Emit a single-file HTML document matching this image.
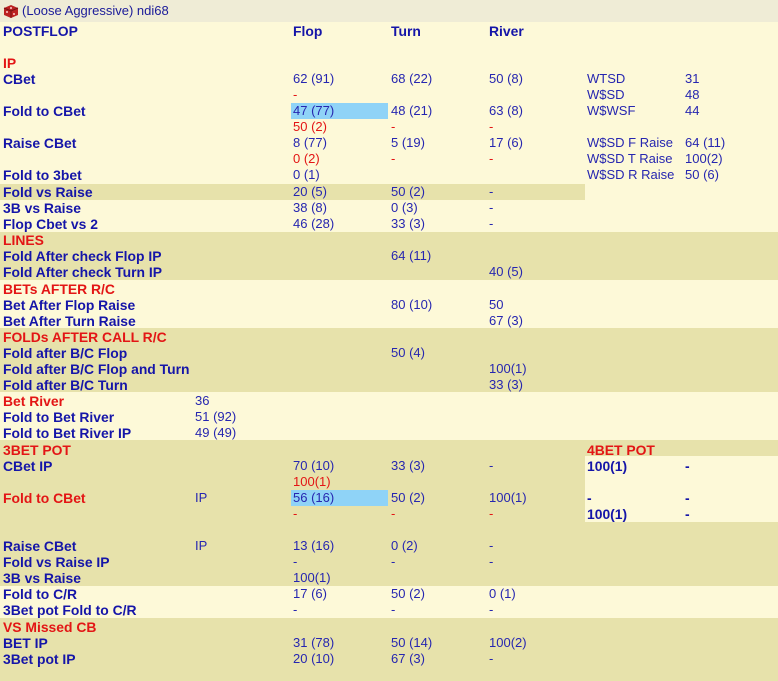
<!DOCTYPE html>
<html><head><meta charset="utf-8"><style>
body{margin:0;width:778px;height:681px;overflow:hidden;background:#fdf9d8;font-family:"Liberation Sans",Arial,sans-serif;font-size:13px;position:relative}
.d{position:absolute;background:#e7e2ab}
.l{position:absolute;background:#fdf9d8}
.h{position:absolute;background:#8fd3f7;width:97px;height:16px}
.t{position:absolute;line-height:16px;color:#2626b0;white-space:nowrap}
.b{font-weight:bold;color:#1515a8;font-size:13.9px}
.r{color:#e31515}
.rb{font-weight:bold;color:#e31515;font-size:13.9px}
</style></head><body>
<div class="d" style="left:0;top:0;width:778px;height:22px;background:#efecd6"></div>
<svg style="position:absolute;left:3px;top:3px" width="16" height="16" viewBox="0 0 16 16"><path d="M1 5 L8 2 L15 5 L15 12 L8 15 L1 12Z" fill="#b22"/><path d="M1 5 L8 8 L15 5 M8 8 L8 15" stroke="#711" fill="none"/><circle cx="4" cy="9" r="1" fill="#fcc"/><circle cx="11" cy="11" r="1" fill="#fcc"/><circle cx="8" cy="5" r="1" fill="#fcc"/></svg>
<div class="t" style="left:22px;top:3px;color:#1a1a99">(Loose Aggressive) ndi68</div>

<div class="d" style="left:0;top:184px;width:585px;height:16px"></div>
<div class="d" style="left:0;top:232px;width:778px;height:48px"></div>
<div class="d" style="left:0;top:328px;width:778px;height:64px"></div>
<div class="d" style="left:0;top:440px;width:778px;height:146px"></div>
<div class="l" style="left:585px;top:456px;width:193px;height:66px"></div>
<div class="d" style="left:0;top:618px;width:778px;height:63px"></div>
<div class="h" style="left:291px;top:103px"></div>
<div class="h" style="left:291px;top:490px"></div>

<div class="t b" style="left:3px;top:23px">POSTFLOP</div>
<div class="t b" style="left:293px;top:23px">Flop</div>
<div class="t b" style="left:391px;top:23px">Turn</div>
<div class="t b" style="left:489px;top:23px">River</div>
<div class="t rb" style="left:3px;top:55px">IP</div>
<div class="t b" style="left:3px;top:71px">CBet</div>
<div class="t" style="left:293px;top:71px">62 (91)</div><div class="t" style="left:391px;top:71px">68 (22)</div><div class="t" style="left:489px;top:71px">50 (8)</div>
<div class="t" style="left:587px;top:71px">WTSD</div><div class="t" style="left:685px;top:71px">31</div>
<div class="t r" style="left:293px;top:87px">-</div>
<div class="t" style="left:587px;top:87px">W$SD</div><div class="t" style="left:685px;top:87px">48</div>
<div class="t b" style="left:3px;top:103px">Fold to CBet</div>
<div class="t" style="left:293px;top:103px">47 (77)</div><div class="t" style="left:391px;top:103px">48 (21)</div><div class="t" style="left:489px;top:103px">63 (8)</div>
<div class="t" style="left:587px;top:103px">W$WSF</div><div class="t" style="left:685px;top:103px">44</div>
<div class="t r" style="left:293px;top:119px">50 (2)</div><div class="t r" style="left:391px;top:119px">-</div><div class="t r" style="left:489px;top:119px">-</div>
<div class="t b" style="left:3px;top:135px">Raise CBet</div>
<div class="t" style="left:293px;top:135px">8 (77)</div><div class="t" style="left:391px;top:135px">5 (19)</div><div class="t" style="left:489px;top:135px">17 (6)</div>
<div class="t" style="left:587px;top:135px">W$SD F Raise</div><div class="t" style="left:685px;top:135px">64 (11)</div>
<div class="t r" style="left:293px;top:151px">0 (2)</div><div class="t r" style="left:391px;top:151px">-</div><div class="t r" style="left:489px;top:151px">-</div>
<div class="t" style="left:587px;top:151px">W$SD T Raise</div><div class="t" style="left:685px;top:151px">100(2)</div>
<div class="t b" style="left:3px;top:167px">Fold to 3bet</div><div class="t" style="left:293px;top:167px">0 (1)</div>
<div class="t" style="left:587px;top:167px">W$SD R Raise</div><div class="t" style="left:685px;top:167px">50 (6)</div>
<div class="t b" style="left:3px;top:184px">Fold vs Raise</div><div class="t" style="left:293px;top:184px">20 (5)</div><div class="t" style="left:391px;top:184px">50 (2)</div><div class="t" style="left:489px;top:184px">-</div>
<div class="t b" style="left:3px;top:200px">3B vs Raise</div><div class="t" style="left:293px;top:200px">38 (8)</div><div class="t" style="left:391px;top:200px">0 (3)</div><div class="t" style="left:489px;top:200px">-</div>
<div class="t b" style="left:3px;top:216px">Flop Cbet vs 2</div><div class="t" style="left:293px;top:216px">46 (28)</div><div class="t" style="left:391px;top:216px">33 (3)</div><div class="t" style="left:489px;top:216px">-</div>
<div class="t rb" style="left:3px;top:232px">LINES</div>
<div class="t b" style="left:3px;top:248px">Fold After check Flop IP</div><div class="t" style="left:391px;top:248px">64 (11)</div>
<div class="t b" style="left:3px;top:264px">Fold After check Turn IP</div><div class="t" style="left:489px;top:264px">40 (5)</div>
<div class="t rb" style="left:3px;top:281px">BETs AFTER R/C</div>
<div class="t b" style="left:3px;top:297px">Bet After Flop Raise</div><div class="t" style="left:391px;top:297px">80 (10)</div><div class="t" style="left:489px;top:297px">50</div>
<div class="t b" style="left:3px;top:313px">Bet After Turn Raise</div><div class="t" style="left:489px;top:313px">67 (3)</div>
<div class="t rb" style="left:3px;top:329px">FOLDs AFTER CALL R/C</div>
<div class="t b" style="left:3px;top:345px">Fold after B/C Flop</div><div class="t" style="left:391px;top:345px">50 (4)</div>
<div class="t b" style="left:3px;top:361px">Fold after B/C Flop and Turn</div><div class="t" style="left:489px;top:361px">100(1)</div>
<div class="t b" style="left:3px;top:377px">Fold after B/C Turn</div><div class="t" style="left:489px;top:377px">33 (3)</div>
<div class="t rb" style="left:3px;top:393px">Bet River</div><div class="t" style="left:195px;top:393px">36</div>
<div class="t b" style="left:3px;top:409px">Fold to Bet River</div><div class="t" style="left:195px;top:409px">51 (92)</div>
<div class="t b" style="left:3px;top:425px">Fold to Bet River IP</div><div class="t" style="left:195px;top:425px">49 (49)</div>
<div class="t rb" style="left:3px;top:442px">3BET POT</div><div class="t rb" style="left:587px;top:442px">4BET POT</div>
<div class="t b" style="left:3px;top:458px">CBet IP</div><div class="t" style="left:293px;top:458px">70 (10)</div><div class="t" style="left:391px;top:458px">33 (3)</div><div class="t" style="left:489px;top:458px">-</div>
<div class="t b" style="left:587px;top:458px">100(1)</div><div class="t b" style="left:685px;top:458px">-</div>
<div class="t r" style="left:293px;top:474px">100(1)</div>
<div class="t rb" style="left:3px;top:490px">Fold to CBet</div><div class="t" style="left:195px;top:490px">IP</div>
<div class="t" style="left:293px;top:490px">56 (16)</div><div class="t" style="left:391px;top:490px">50 (2)</div><div class="t" style="left:489px;top:490px">100(1)</div>
<div class="t b" style="left:587px;top:490px">-</div><div class="t b" style="left:685px;top:490px">-</div>
<div class="t r" style="left:293px;top:506px">-</div><div class="t r" style="left:391px;top:506px">-</div><div class="t r" style="left:489px;top:506px">-</div>
<div class="t b" style="left:587px;top:506px">100(1)</div><div class="t b" style="left:685px;top:506px">-</div>
<div class="t b" style="left:3px;top:538px">Raise CBet</div><div class="t" style="left:195px;top:538px">IP</div>
<div class="t" style="left:293px;top:538px">13 (16)</div><div class="t" style="left:391px;top:538px">0 (2)</div><div class="t" style="left:489px;top:538px">-</div>
<div class="t b" style="left:3px;top:554px">Fold vs Raise IP</div><div class="t" style="left:293px;top:554px">-</div><div class="t" style="left:391px;top:554px">-</div><div class="t" style="left:489px;top:554px">-</div>
<div class="t b" style="left:3px;top:570px">3B vs Raise</div><div class="t" style="left:293px;top:570px">100(1)</div>
<div class="t b" style="left:3px;top:586px">Fold to C/R</div><div class="t" style="left:293px;top:586px">17 (6)</div><div class="t" style="left:391px;top:586px">50 (2)</div><div class="t" style="left:489px;top:586px">0 (1)</div>
<div class="t b" style="left:3px;top:602px">3Bet pot Fold to C/R</div><div class="t" style="left:293px;top:602px">-</div><div class="t" style="left:391px;top:602px">-</div><div class="t" style="left:489px;top:602px">-</div>
<div class="t rb" style="left:3px;top:619px">VS Missed CB</div>
<div class="t b" style="left:3px;top:635px">BET IP</div><div class="t" style="left:293px;top:635px">31 (78)</div><div class="t" style="left:391px;top:635px">50 (14)</div><div class="t" style="left:489px;top:635px">100(2)</div>
<div class="t b" style="left:3px;top:651px">3Bet pot IP</div><div class="t" style="left:293px;top:651px">20 (10)</div><div class="t" style="left:391px;top:651px">67 (3)</div><div class="t" style="left:489px;top:651px">-</div>
</body></html>
